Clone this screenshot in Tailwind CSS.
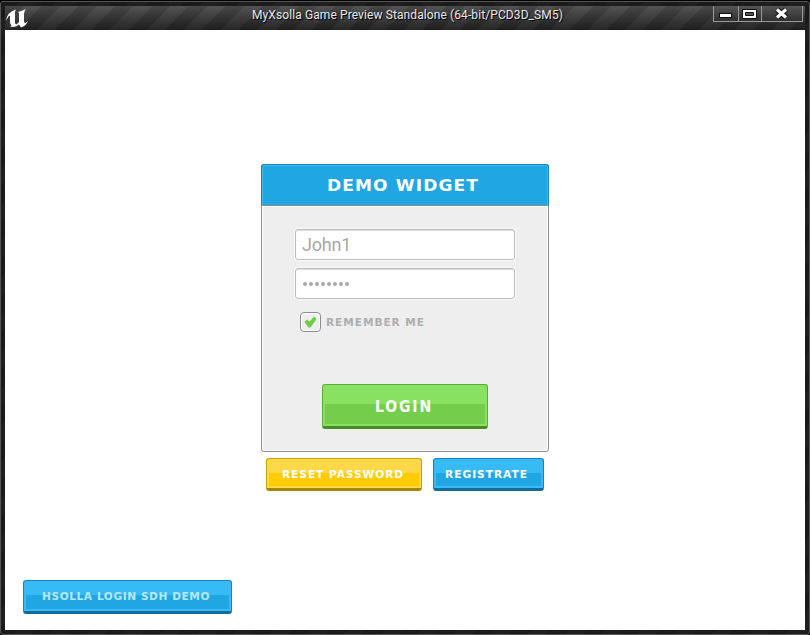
<!DOCTYPE html>
<html lang="en">
<head>
<meta charset="utf-8">
<title>MyXsolla Game Preview</title>
<script src="https://cdn.jsdelivr.net/npm/@tailwindcss/browser@4"></script>
</head>
<body class="bg-black pt-px">
<div class="relative flex h-[634px] w-[810px] flex-col overflow-hidden rounded-[3px] border border-[#555] bg-[repeating-linear-gradient(135deg,#1a1a1a_0_13px,#1f1f1f_13px_26px)] px-1 pt-1 pb-1 font-['Roboto',sans-serif]">
  <header class="relative flex h-6 shrink-0 items-start justify-center bg-linear-to-b from-[#505050] to-[#222]">
    <div class="absolute inset-0 bg-[repeating-linear-gradient(135deg,#0000001c_0_13px,#ffffff05_13px_26px)]"></div>
    <svg class="absolute top-[3px] left-0 h-[19px] w-[24px]" viewBox="0 0 24 19" fill="#fff"><path d="M1 12 Q2 3 11 0.500 L10 3 V13 Q10 16 12 15 L14 13 V4 L13 3 Q17 2 21 0 Q19 2 19 5 V12 Q19 16 23 12 Q21 17 16 18.500 L14 15.500 Q11 19 5 17.500 L6.500 16.500 Q5 15.500 5 13 V7 Q4 6 1 12 Z"/></svg>
    <h1 class="relative mt-[2px] ml-[5px] text-[12px] leading-[14px] tracking-[0.1px] whitespace-nowrap text-[#e8e8e8] [text-shadow:1px_1px_0_#000]">MyXsolla Game Preview Standalone (64-bit/PCD3D_SM5)</h1>
    <div class="absolute top-0 right-[2px] flex h-4 border border-t-0 border-[#999] bg-linear-to-b from-[#555] to-[#303030]">
      <div class="h-full w-[25px] border-r border-[#999]"><svg class="h-[15px] w-6"><rect x="5.500" y="7.500" width="12" height="4" fill="#fff" stroke="#111"/></svg></div>
      <div class="h-full w-[23px] border-r border-[#999]"><svg class="h-[15px] w-[22px]"><path d="M3.500 3.500h14v9h-14z" fill="#fff" stroke="#111"/><path d="M6.500 6.500h8v3h-8z" fill="#555" stroke="#111"/></svg></div>
      <div class="h-full w-[40px]"><svg class="h-[15px] w-[40px]"><path d="M15 3.500 L24 11.500 M24 3.500 L15 11.500" stroke="#111" stroke-width="5.500"/><path d="M15 3.500 L24 11.500 M24 3.500 L15 11.500" stroke="#fff" stroke-width="3.200"/></svg></div>
    </div>
  </header>
  <main class="flex h-[600px] shrink-0 flex-col bg-white pt-[134px]">
    <section class="mx-auto h-[288px] w-[288px] rounded-[3px] border border-[#8e8e8e] bg-[#eee] shadow-[inset_0_0_0_1px_#fff]">
      <h2 class="-mx-px -mt-px flex h-[41px] items-center justify-center rounded-t-[3px] border border-b-0 border-[#1783b8] bg-[#20a6e2] pr-[5px] text-white shadow-[inset_0_1px_0_#3bbcf3,inset_1px_0_0_#3bbcf3,inset_-1px_0_0_#3bbcf3]"><svg class="h-[20px] w-[152px] overflow-visible"><text x="0" y="16" textLength="152" lengthAdjust="spacingAndGlyphs" letter-spacing="1" fill="#fff" font-family="DejaVu Sans" font-weight="bold" font-size="15">DEMO WIDGET</text></svg></h2>
      <div class="h-px bg-[#8e8e8e]"></div>
      <div class="mx-px h-px bg-white"></div>
      <div class="flex flex-col pt-[22px] pl-[33px]">
        <div class="flex h-[31px] w-[220px] items-center rounded-[3px] border border-[#bcbcbc] bg-white pl-[6px] text-[18px] tracking-[-0.2px] text-[#a8a8a8] shadow-[0_0_0_1px_#fafafa,inset_0_1px_1px_#ddd]">John1</div>
        <div class="mt-2 flex h-[31px] w-[220px] items-center rounded-[3px] border border-[#bcbcbc] bg-white pl-[7px] shadow-[0_0_0_1px_#fafafa,inset_0_1px_1px_#ddd]"><svg class="h-[6px] w-[48px]" fill="#a8a8a8"><circle cx="2" cy="3" r="2"/><circle cx="8" cy="3" r="2"/><circle cx="14" cy="3" r="2"/><circle cx="20" cy="3" r="2"/><circle cx="26" cy="3" r="2"/><circle cx="32" cy="3" r="2"/><circle cx="38" cy="3" r="2"/><circle cx="44" cy="3" r="2"/></svg></div>
        <div class="mt-[13px] ml-[5px] flex h-5 items-center">
          <div class="flex h-5 w-[21px] items-center justify-center rounded-[4px] border border-[#8e8e8e] shadow-[inset_0_0_0_1px_#fff]"><svg class="h-[12px] w-[13px]" viewBox="0 0 13 12"><path d="M0.500 6 L3 3.500 L5.500 5.500 L10 0.500 L12.500 3 L6.500 11.500 H4.500Z" fill="#6fce43"/></svg></div>
          <svg class="ml-[5px] h-[16px] w-[104px]"><text x="0" y="12" textLength="99" lengthAdjust="spacingAndGlyphs" letter-spacing="1" fill="#adadad" font-family="DejaVu Sans" font-weight="bold" font-size="11">REMEMBER ME</text></svg>
        </div>
      </div>
      <div class="mt-[52px] ml-[60px] flex h-[45px] w-[166px] items-center rounded-[3px] border border-b-[3px] border-[#5eac38] border-b-[#458c25] bg-[linear-gradient(#89e162_0_19px,#74ce4b_19px)] pl-[51px] shadow-[inset_0_0_0_2px_#89e162]"><svg class="h-[20px] w-[66px]"><text x="1" y="16" textLength="58" lengthAdjust="spacingAndGlyphs" letter-spacing="2" fill="#fff" font-family="DejaVu Sans" font-weight="bold" font-size="15">LOGIN</text></svg></div>
    </section>
    <div class="mt-[6px] ml-[261px] flex gap-[11px]">
      <div class="flex h-[33px] w-[156px] items-center rounded-[3px] border border-b-[3px] border-[#cda300] border-b-[#a98500] bg-[linear-gradient(#ffd84a_0_14px,#ffcc00_14px)] pl-[15px] shadow-[inset_0_0_0_2px_#ffd84a]"><svg class="h-[16px] w-[128px]"><text x="0" y="12" textLength="122" lengthAdjust="spacingAndGlyphs" letter-spacing="1" fill="#fff" font-family="DejaVu Sans" font-weight="bold" font-size="11">RESET PASSWORD</text></svg></div>
      <div class="flex h-[33px] w-[111px] items-center rounded-[3px] border border-b-[3px] border-[#1783b8] border-b-[#116c98] bg-[linear-gradient(#38bbf5_0_14px,#20a6e2_14px)] pl-[11px] shadow-[inset_0_0_0_2px_#38bbf5]"><svg class="h-[16px] w-[90px]"><text x="0" y="12" textLength="83" lengthAdjust="spacingAndGlyphs" letter-spacing="1" fill="#fff" font-family="DejaVu Sans" font-weight="bold" font-size="11">REGISTRATE</text></svg></div>
    </div>
    <div class="mt-auto mb-[16px] ml-[18px] flex h-[34px] w-[209px] items-center rounded-[3px] border border-b-[3px] border-[#1783b8] border-b-[#116c98] bg-[linear-gradient(#38bbf5_0_14px,#20a6e2_14px)] pl-[18px] shadow-[inset_0_0_0_2px_#38bbf5]"><svg class="h-[16px] w-[182px] overflow-visible"><text x="0" y="12" textLength="168" lengthAdjust="spacingAndGlyphs" letter-spacing="0.6" fill="#b9e7fb" font-family="DejaVu Sans" font-weight="bold" font-size="11">HSOLLA LOGIN SDH DEMO</text></svg></div>
  </main>
</div>
</body>
</html>
